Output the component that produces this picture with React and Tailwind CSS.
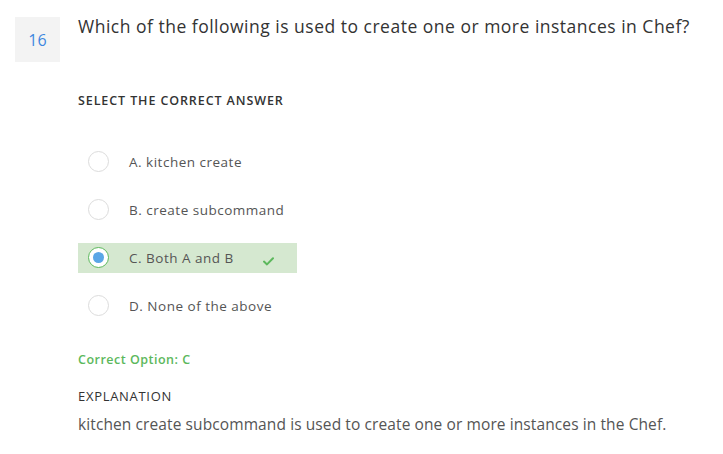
import React from 'react';

const options = [
  { key: 'A', text: 'kitchen create' },
  { key: 'B', text: 'create subcommand' },
  { key: 'C', text: 'Both A and B', correct: true },
  { key: 'D', text: 'None of the above' },
];

const Radio = ({ checked }) => (
  <span
    className={`flex h-[21px] w-[21px] shrink-0 items-center justify-center rounded-full border bg-white ${checked ? 'border-[#5cb85c]' : 'border-[#dcdcdc]'}`}
  >
    {checked && <span className="h-[11px] w-[11px] rounded-full bg-[#5aa6e6]" />}
  </span>
);

const Check = () => (
  <svg width="11" height="9" viewBox="0 0 11 9" fill="none">
    <path d="M1 4.6 L4 7.4 L10 1.2" stroke="#5cb85c" strokeWidth="2" strokeLinecap="round" strokeLinejoin="round" />
  </svg>
);

export default function App() {
  return (
    <div className="min-h-screen bg-white font-['Open_Sans',sans-serif]">
      <div className="flex pl-[15px] pt-[17px]">
        {/* question number */}
        <div className="flex h-[45px] w-[45px] shrink-0 items-center justify-center bg-[#f3f3f3] text-[16px] text-[#3d87e0]">
          16
        </div>

        <div className="ml-[18px] flex-1">
          <h1 className="mt-[-2px] text-[17.5px] leading-[22px] tracking-[0.5px] text-[#333]">
            Which of the following is used to create one or more instances in Chef?
          </h1>

          <p className="mt-[55px] text-[12.5px] font-semibold uppercase tracking-[0.9px] text-[#333]">
            Select the correct answer
          </p>

          <ul className="mt-[36px] flex flex-col gap-[18px]">
            {options.map((o) => (
              <li
                key={o.key}
                className={`flex h-[30px] w-[219px] items-center pl-[10px] ${o.correct ? 'bg-[#d5e8d0]' : ''}`}
              >
                <Radio checked={o.correct} />
                <span className="ml-[20px] whitespace-nowrap text-[13.5px] tracking-[0.5px] text-[#555]">
                  {o.key}. {o.text}
                </span>
                {o.correct && (
                  <span className="ml-auto mr-[23px] mt-[8px]">
                    <Check />
                  </span>
                )}
              </li>
            ))}
          </ul>

          <p className="mt-[30px] text-[12.5px] font-semibold tracking-[0.5px] text-[#5cb85c]">Correct Option: C</p>

          <p className="mt-[17px] text-[13px] tracking-[0.7px] text-[#333]">EXPLANATION</p>
          <p className="mt-[7px] text-[15.5px] tracking-[0.1px] text-[#555]">
            kitchen create subcommand is used to create one or more instances in the Chef.
          </p>
        </div>
      </div>
    </div>
  );
}
